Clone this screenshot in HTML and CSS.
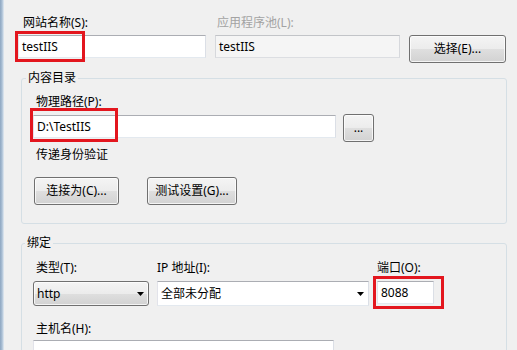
FILE: index.html
```html
<!DOCTYPE html>
<html lang="zh-CN">
<head>
<meta charset="utf-8">
<title>添加网站</title>
<link rel="stylesheet" href="styles.css">
</head>
<body>
<div class="window">
  <div class="frame"></div>
  <div class="content">
    <div class="top">
      <div class="lbl lbl-site">网站名称(S):</div>
      <div class="lbl lbl-pool">应用程序池(L):</div>
      <div></div>
      <div class="mark">
        <div class="input">testIIS</div>
        <span class="hl hl-site"></span>
      </div>
      <div class="input readonly">testIIS</div>
      <button class="btn btn-select">选择(E)...</button>
    </div>

    <fieldset class="group group-content">
      <legend>内容目录</legend>
      <div class="gbody gbody-content">
        <div class="lbl ind lbl-path">物理路径(P):</div>
        <div class="path-row">
          <div class="mark path-mark">
            <div class="input w-path">D:\TestIIS</div>
            <span class="hl hl-path"></span>
          </div>
          <button class="btn btn-dots">...</button>
        </div>
        <div class="lbl ind lbl-pass">传递身份验证</div>
        <div class="btn-row">
          <button class="btn w-conn">连接为(C)...</button>
          <button class="btn w-test">测试设置(G)...</button>
        </div>
      </div>
    </fieldset>

    <fieldset class="group group-bind">
      <legend>绑定</legend>
      <div class="gbody gbody-bind">
        <div class="bind-grid">
          <div class="lbl ind">类型(T):</div>
          <div class="lbl">IP 地址(I):</div>
          <div class="lbl">端口(O):</div>
          <div class="btn dd">
            <span>http</span>
            <svg class="arrow" width="7" height="4" viewBox="0 0 7 4"><polygon points="0,0 7,0 3.5,4" fill="#000"/></svg>
          </div>
          <div class="input combo">
            <span>全部未分配</span>
            <svg class="arrow" width="7" height="4" viewBox="0 0 7 4"><polygon points="0,0 7,0 3.5,4" fill="#000"/></svg>
          </div>
          <div class="mark">
            <div class="input w-port">8088</div>
            <span class="hl hl-port"></span>
          </div>
        </div>
        <div class="lbl ind lbl-host">主机名(H):</div>
        <div class="input w-host"></div>
      </div>
    </fieldset>
  </div>
</div>
</body>
</html>
```

FILE: styles.css
```css
html, body {
  margin: 0;
  padding: 0;
}

body {
  background: #f0f0f0;
  font-family: "Noto Sans", "Noto Sans CJK SC", sans-serif;
  font-size: 12px;
  color: #000;
  overflow: hidden;
}

.window {
  display: flex;
  height: 350px;
  overflow: hidden;
}

.frame {
  flex: none;
  width: 4px;
  background: linear-gradient(to right, #8ea7c1 0, #a7bcd2 45%, #c4d3e2 75%, #e8eef4 100%);
}

.content {
  flex: 1;
  min-width: 0;
  padding-top: 15px;
}

/* top row */
.top {
  display: grid;
  grid-template-columns: 188px 185px 97px;
  column-gap: 9px;
  row-gap: 4px;
  margin-left: 14px;
  align-items: start;
}

.lbl {
  height: 16px;
  line-height: 16px;
  white-space: nowrap;
}

.lbl-site {
  padding-left: 5px;
}

.lbl-pool {
  padding-left: 2px;
  color: #a3a3a3;
}

.ind {
  padding-left: 3px;
}

.input {
  box-sizing: border-box;
  height: 23px;
  line-height: 21px;
  background: #fff;
  border: 1px solid;
  border-color: #abadb3 #dbdfe6 #e3e9ef #e2e3ea;
  padding: 0 3px;
  white-space: nowrap;
}

.readonly {
  background: #f5f5f5;
  border-color: #c2c4c8 #d6d8dc #dcdee2 #d6d8dc;
}

.btn {
  box-sizing: border-box;
  height: 28px;
  border: 1px solid #707070;
  border-radius: 3px;
  background: linear-gradient(#f4f4f4 0%, #ececec 50%, #dfdfdf 50%, #d2d2d2 100%);
  box-shadow: inset 0 0 0 1px rgba(255, 255, 255, 0.75);
  font: inherit;
  color: #000;
  padding: 0;
  line-height: 26px;
  text-align: center;
}

.btn-select {
  width: 97px;
}

/* red annotation boxes */
.mark {
  position: relative;
}

.hl {
  position: absolute;
  box-sizing: border-box;
  border: 3px solid #e3161e;
  pointer-events: none;
}

.hl-site {
  left: -3px;
  top: -4px;
  width: 70px;
  height: 31px;
}

.hl-path {
  left: -3px;
  top: -7px;
  width: 88px;
  height: 34px;
}

.hl-port {
  left: -4px;
  top: -5px;
  width: 71px;
  height: 33px;
}

/* group boxes */
.group {
  border: 1px solid #d5dfe5;
  border-radius: 3px;
  margin: 7px 10px 0 17px;
  padding: 0;
  min-width: 0;
}

.group legend {
  padding: 0 2px;
  margin-left: 4px;
  line-height: 16px;
}

.group-bind {
  margin-top: 11px;
}

.group-bind legend {
  margin-left: 3px;
}

.gbody {
  padding: 0 0 18px 11px;
}

.lbl-path {
  margin-top: 8px;
}

.path-row {
  display: flex;
  align-items: flex-start;
  gap: 7px;
  margin-top: 4px;
}

.path-mark {
  margin-top: 1px;
}

.w-path {
  width: 303px;
}

.btn-dots {
  width: 31px;
  line-height: 22px;
}

.lbl-pass {
  margin-top: 5px;
}

.btn-row {
  display: flex;
  gap: 28px;
  margin-top: 14px;
  padding-left: 1px;
}

.w-conn {
  width: 85px;
}

.w-test {
  width: 90px;
}

/* bindings */
.gbody-bind {
  padding-bottom: 40px;
}

.bind-grid {
  display: grid;
  grid-template-columns: 116px 212px 57px;
  column-gap: 8px;
  row-gap: 5px;
  margin-top: 9px;
  align-items: start;
}

.dd {
  height: 25px;
  display: flex;
  align-items: center;
  justify-content: space-between;
  padding: 0 4px 0 3px;
  text-align: left;
}

.combo {
  height: 25px;
  display: flex;
  align-items: center;
  justify-content: space-between;
  padding: 0 4px 0 3px;
}

.arrow {
  flex: none;
  display: block;
}

.w-port {
  width: 57px;
}

.lbl-host {
  margin-top: 15px;
}

.w-host {
  width: 301px;
  margin-top: 3px;
}
```
